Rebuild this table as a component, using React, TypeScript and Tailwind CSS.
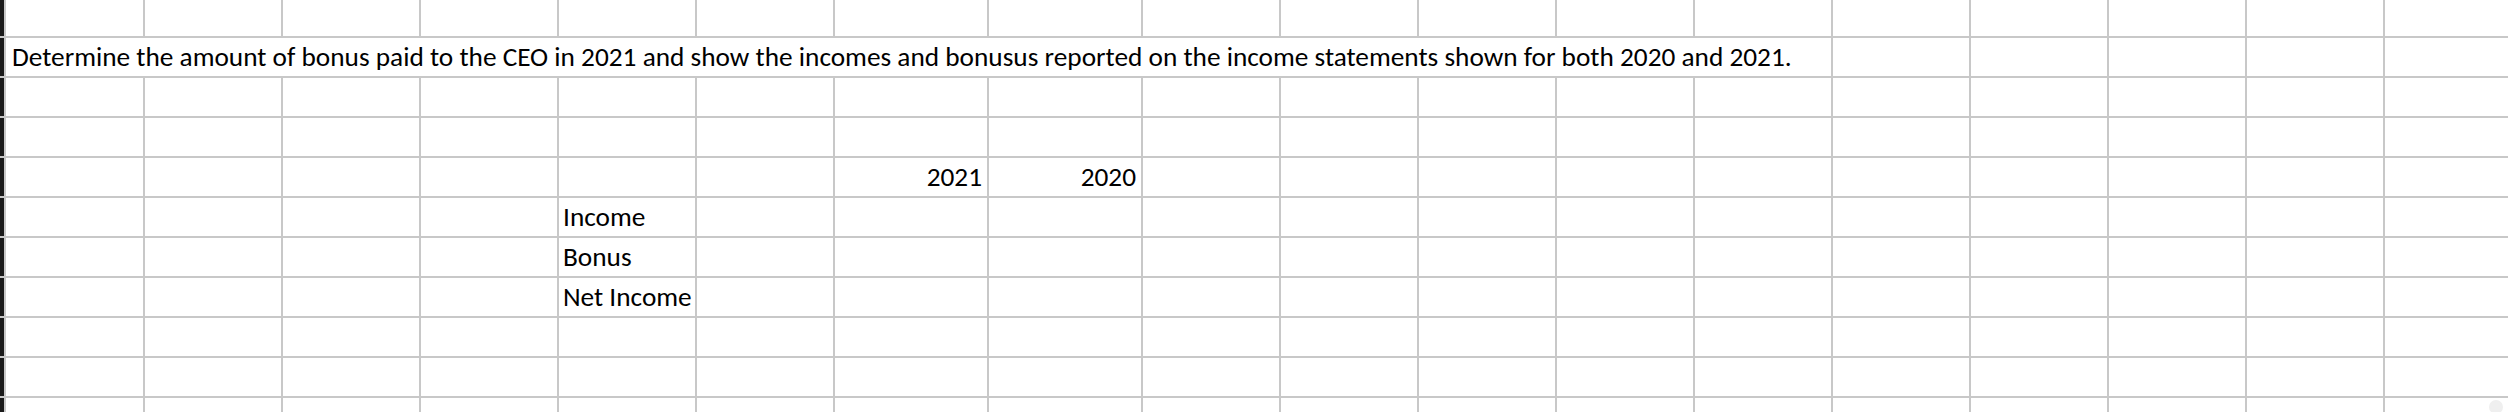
import React from "react";

const COLS = "4px 137px 136px 136px 136px 136px 136px 152px 152px 136px 136px 136px 136px 136px 136px 136px 136px 136px 1fr";
const ROWS = "36px repeat(9, 38px) 40px";

const font = { fontFamily: "Carlito, Lato, 'Liberation Sans', sans-serif" };

function Cell({ children, className = "" }: { children?: React.ReactNode; className?: string }) {
  return <div className={`bg-white flex items-end pb-[6px] text-[27.3px] leading-none text-black whitespace-nowrap overflow-hidden ${className}`}>{children}</div>;
}

export default function App() {
  const rows: React.ReactNode[] = [];
  for (let r = 0; r < 11; r++) {
    rows.push(<div key={`b${r}`} className="bg-[#1a1a1a]" />);
    if (r === 1) {
      rows.push(
        <Cell key={`t${r}`} className="col-span-13 pl-[6px]">
          Determine the amount of bonus paid to the CEO in 2021 and show the incomes and bonusus reported on the income statements shown for both 2020 and 2021.
        </Cell>
      );
      for (let c = 0; c < 5; c++) rows.push(<Cell key={`c${r}-${c}`} />);
      continue;
    }
    for (let c = 0; c < 18; c++) {
      let content: React.ReactNode = null;
      let cls = "";
      if (r === 4 && c === 6) { content = "2021"; cls = "justify-end pr-[5px]"; }
      if (r === 4 && c === 7) { content = "2020"; cls = "justify-end pr-[5px]"; }
      if (c === 4 && r === 5) { content = "Income"; cls = "pl-[4px]"; }
      if (c === 4 && r === 6) { content = "Bonus"; cls = "pl-[4px]"; }
      if (c === 4 && r === 7) { content = "Net Income"; cls = "pl-[4px]"; }
      rows.push(<Cell key={`c${r}-${c}`} className={cls}>{content}</Cell>);
    }
  }
  return (
    <div className="relative w-[2509px] h-[412px] overflow-hidden bg-white" style={font}>
      <div
        className="grid gap-[2px] bg-[#c8c8c8] w-[2508px]"
        style={{ gridTemplateColumns: COLS, gridTemplateRows: ROWS }}
      >
        {rows}
      </div>
      <div className="absolute right-[6px] bottom-[-2px] w-[14px] h-[14px] rounded-full bg-[#efefef]" />
    </div>
  );
}
